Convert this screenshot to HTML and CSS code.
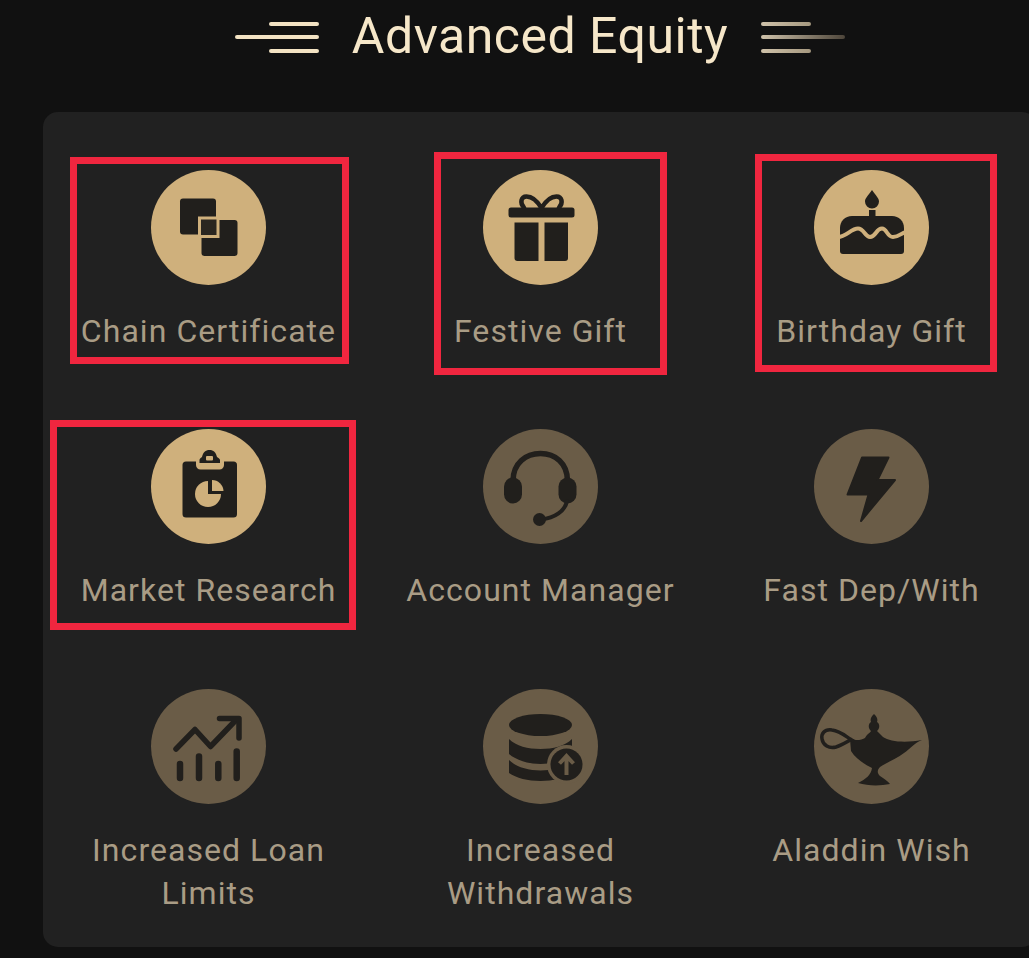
FILE: index.html
```html
<!DOCTYPE html>
<html lang="en">
<head>
<meta charset="utf-8">
<title>Advanced Equity</title>
<link rel="stylesheet" href="styles.css">
</head>
<body>
<main class="page">
  <header class="header">
    <div class="orn orn-left"><i class="short"></i><i class="long"></i><i class="short"></i></div>
    <h1 class="title">Advanced Equity</h1>
    <div class="orn orn-right"><i class="short"></i><i class="long"></i><i class="short"></i></div>
  </header>
  <section class="card">
    <div class="cell">
      <span class="mark mark-1"></span>
      <svg class="ico" viewBox="0 0 115 115"><circle class="on" cx="57.5" cy="57.5" r="57.5"/><rect class="ink" x="29" y="28.5" width="36" height="36" rx="3"/><rect class="ink" x="50.5" y="50" width="36" height="36" rx="3"/><rect class="overlap" x="48.5" y="48" width="18.5" height="18.5"/></svg>
      <p class="label">Chain Certificate</p>
    </div>
    <div class="cell">
      <span class="mark mark-2"></span>
      <svg class="ico" viewBox="0 0 115 115"><circle class="on" cx="57.5" cy="57.5" r="57.5"/><rect class="ink" x="25.5" y="37.5" width="66" height="10" rx="2.5"/><path class="ink" d="M31.5 52.5H55.5V91H34.5a3 3 0 0 1-3-3Z"/><path class="ink" d="M61.5 52.5H85V88a3 3 0 0 1-3 3H61.5Z"/><path class="line bow" d="M58.5 38C53 29 47 26.500 43.500 26.500C38 26.500 36.500 33 41 37.500M58.500 38C64 29 70 26.500 73.500 26.500C79 26.500 80.500 33 76 37.500"/></svg>
      <p class="label">Festive Gift</p>
    </div>
    <div class="cell">
      <span class="mark mark-3"></span>
      <svg class="ico" viewBox="0 0 115 115"><circle class="on" cx="57.500" cy="57.500" r="57.500"/><path class="ink" d="M58 20C54 26 51 28 51 31.500A7 7 0 0 0 65 31.500C65 28 62 26 58 20Z"/><rect class="ink" x="55" y="40" width="6.500" height="8"/><path class="ink" d="M38 46H78C85 46 90 51 90 58V81a3 3 0 0 1-3 3H29a3 3 0 0 1-3-3V58C26 51 31 46 38 46Z"/><path class="wave" d="M24 67C32 67 37 58.500 44 58.500C50 58.500 51 67 56 67C62 67 62 58.500 68 58.500C73 58.500 73 67 79 67C85 67 87 63 92 62"/></svg>
      <p class="label">Birthday Gift</p>
    </div>
    <div class="cell">
      <span class="mark mark-4"></span>
      <svg class="ico" viewBox="0 0 115 115"><circle class="on" cx="57.500" cy="57.500" r="57.500"/><rect class="ink" x="31.500" y="32.500" width="54.500" height="56" rx="3.500"/><path class="gold" d="M45 28H73V36C73 38.500 71 40.500 68.500 40.500H49.500C47 40.500 45 38.500 45 36Z"/><path class="ink" d="M48.500 34V31C48.500 30 49.500 29 51 28C52 23.500 54.500 21 58.500 21C62.500 21 65 23.500 66 28C67.500 29 69 30 69 31V34Z"/><rect class="gold" x="55" y="27" width="7" height="4.500" rx="1"/><path class="gold" d="M57 52A13 13 0 1 0 70 65H57Z"/><path class="gold" d="M61 51A11.500 11.500 0 0 1 72.500 62H61Z"/></svg>
      <p class="label">Market Research</p>
    </div>
    <div class="cell">
      <svg class="ico" viewBox="0 0 115 115"><circle class="off" cx="57.500" cy="57.500" r="57.500"/><path class="line thick" d="M30 52C30 34 43 24.500 57.500 24.500C72 24.500 84.500 34 84.500 52"/><rect class="ink" x="21" y="48.500" width="18" height="26" rx="9"/><rect class="ink" x="75.500" y="48.500" width="18" height="26" rx="9"/><path class="line thin" d="M84 72C82 82 72 89 58 90.500"/><circle class="ink" cx="56.500" cy="90.500" r="6.500"/></svg>
      <p class="label">Account Manager</p>
    </div>
    <div class="cell">
      <svg class="ico" viewBox="0 0 115 115"><circle class="off" cx="57.500" cy="57.500" r="57.500"/><path class="ink bolt" d="M48 28.500H74.500L63.500 51H81L47 92L54.500 65.500H33.500Z"/></svg>
      <p class="label">Fast Dep/With</p>
    </div>
    <div class="cell">
      <svg class="ico" viewBox="0 0 115 115"><circle class="off" cx="57.500" cy="57.500" r="57.500"/><path class="line thick" d="M25 60L44 40.500L59.500 57.500L85 31"/><path class="line thick" d="M68.500 29.500H88V49"/><path class="line bar" d="M29 75V89M48 67.500V89M67.300 75V89M85.700 62.500V89"/></svg>
      <p class="label">Increased Loan Limits</p>
    </div>
    <div class="cell">
      <svg class="ico" viewBox="0 0 115 115"><circle class="off" cx="57.500" cy="57.500" r="57.500"/><ellipse class="ink" cx="57.500" cy="36" rx="31.500" ry="11"/><path class="ink" d="M26 50C33 57 45 60 57.500 60C70 60 82 57 89 50V65C82 71 70 75 57.500 75C45 75 33 71 26 65Z"/><path class="ink" d="M26 71C33 78 45 81.500 57.500 81.500C70 81.500 82 78 89 71V84C82 89 70 92 57.500 92C45 92 33 89 26 84Z"/><circle class="off" cx="83.500" cy="75.500" r="19.500"/><circle class="ink" cx="83.500" cy="75.500" r="16"/><path class="arrow" d="M83.500 86V67M76.500 74.500L83.500 67L90.500 74.500"/></svg>
      <p class="label">Increased Withdrawals</p>
    </div>
    <div class="cell">
      <svg class="ico" viewBox="0 0 115 115"><circle class="off" cx="57.500" cy="57.500" r="57.500"/><path class="ink" d="M36 50C42 52 48 51 51 49C53 45 56 44 57 42C54 39 54 35 57 33C56 30 57 28 60 25C63 28 64 30 63 33C66 35 66 39 63 42C65 44 67 46 69 48C76 53 92 54 108 51C100 54 96 60 90 64C82 70 72 74 66 78C63 81 63 84 66 87C70 90 74 92 76 95C66 97 54 97 44 94C52 90 57 86 58 79C50 75 42 70 37 62Z"/><path class="handle" d="M40 52C34 50 28 42 18 41C10 40 7 45 8 50C9 56 15 60 22 58C28 56 33 53 38 50"/></svg>
      <p class="label">Aladdin Wish</p>
    </div>
  </section>
</main>
</body>
</html>
```

FILE: styles.css
```css
html, body {
  margin: 0;
  height: 958px;
  overflow: hidden;
  background: #111;
}
.page {
  width: 1080px;
  box-sizing: border-box;
  padding: 0 43px;
  font-family: Roboto, "Liberation Sans", sans-serif;
}
.header {
  height: 74px;
  margin-bottom: 38px;
  display: flex;
  justify-content: center;
  align-items: center;
  gap: 33px;
}
.title {
  margin: -2px 0 0;
  font-size: 50px;
  line-height: 60px;
  font-weight: 400;
  letter-spacing: 0.500px;
  color: #f6e7c9;
}
.orn {
  width: 84px;
  display: flex;
  flex-direction: column;
  gap: 9.500px;
}
.orn i {
  display: block;
  height: 4px;
  border-radius: 2px;
}
.orn .short { width: 50px; }
.orn .long { width: 84px; }
.orn-left { align-items: flex-end; }
.orn-left i { background: #f3e3c3; }
.orn-right { align-items: flex-start; }
.orn-right .short { background: linear-gradient(90deg, #cfc2aa, #a5987f); }
.orn-right .long { background: linear-gradient(90deg, #cfc2aa, #4d453a); }
.card {
  background: #212121;
  border-radius: 15px;
  height: 835px;
  box-sizing: border-box;
  padding-top: 58px;
  display: grid;
  grid-template-columns: 331px 333px 329px;
  grid-template-rows: 259px 260px auto;
}
.cell {
  position: relative;
  display: flex;
  flex-direction: column;
  align-items: center;
}
.ico {
  display: block;
  width: 115px;
  height: 115px;
  flex: none;
}
.label {
  margin: 25px 0 0;
  max-width: 300px;
  text-align: center;
  font-size: 32px;
  line-height: 43px;
  letter-spacing: 1.050px;
  color: #a99c85;
}
.on, .gold { fill: #cfb07c; }
.off { fill: #6a5c47; }
.ink { fill: #211f1c; }
.bolt { stroke: #211f1c; stroke-width: 2; stroke-linejoin: round; }
.overlap { fill: #2a2620; stroke: #cfb07c; stroke-width: 3; }
.line { fill: none; stroke: #211f1c; stroke-width: 3.500; stroke-linecap: round; stroke-linejoin: round; }
.line.bow { stroke-width: 4.500; }
.line.thick { stroke-width: 5.500; }
.line.thin { stroke-width: 4; }
.line.bar { stroke-width: 6.500; }
.wave { fill: none; stroke: #cfb07c; stroke-width: 4; }
.arrow { fill: none; stroke: #6a5c47; stroke-width: 4; }
.handle { fill: none; stroke: #211f1c; stroke-width: 3.500; }
.mark {
  position: absolute;
  box-sizing: border-box;
  border: 7px solid #f0263f;
}
.mark-1 { left: 27px; top: -13px; width: 279px; height: 207px; }
.mark-2 { left: 60px; top: -18px; width: 233px; height: 223px; }
.mark-3 { left: 48px; top: -16px; width: 242px; height: 218px; }
.mark-4 { left: 7px; top: -9px; width: 306px; height: 210px; }
```
